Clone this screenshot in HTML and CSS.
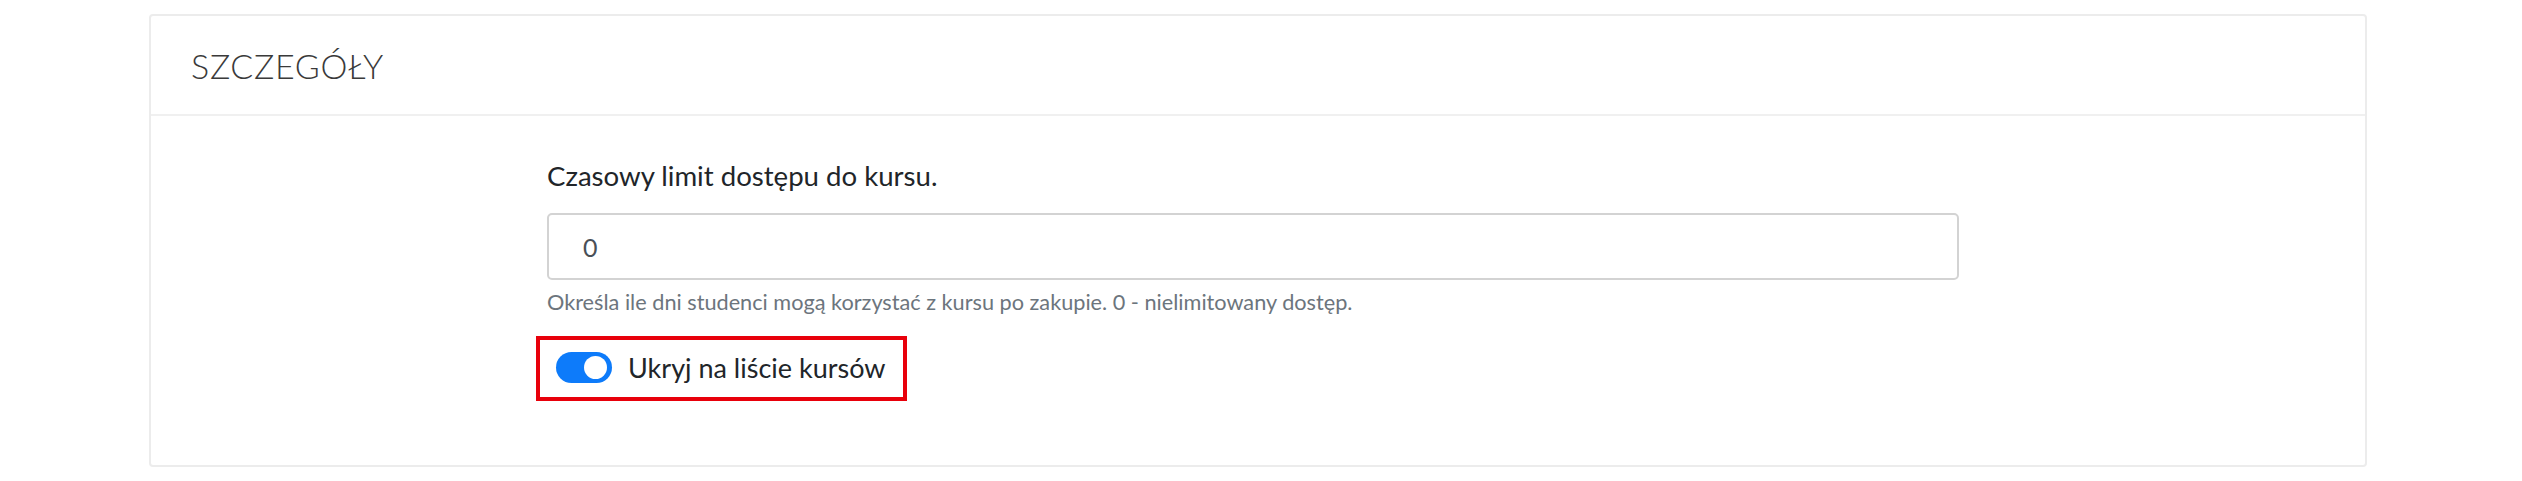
FILE: index.html
```html
<!DOCTYPE html>
<html lang="pl">
<head>
<meta charset="utf-8">
<title>Szczegóły</title>
<link rel="stylesheet" href="styles.css">
</head>
<body>
<div class="page">
  <section class="card">
    <header class="card-header">
      <h2 class="card-title">SZCZEGÓŁY</h2>
    </header>
    <div class="card-body">
      <div class="form-col">
        <label class="field-label" for="limit">Czasowy limit dostępu do kursu.</label>
        <input class="field-input" id="limit" type="text" value="0">
        <p class="field-help">Określa ile dni studenci mogą korzystać z kursu po zakupie. 0 - nielimitowany dostęp.</p>
        <div class="highlight">
          <span class="switch"><span class="knob"></span></span>
          <span class="switch-label">Ukryj na liście kursów</span>
        </div>
      </div>
    </div>
  </section>
</div>
</body>
</html>
```
FILE: styles.css
```css
* { box-sizing: border-box; }
html, body { margin: 0; padding: 0; background: #fff; }
body {
  font-family: Lato, "Liberation Sans", sans-serif;
  color: #212529;
}
.page {
  padding: 14px 155px 14px 149px;
}
.card {
  border: 2px solid #ececec;
  border-radius: 4px;
  background: #fff;
  height: 453px;
  display: flex;
  flex-direction: column;
}
.card-header {
  height: 100px;
  border-bottom: 2px solid #f0f0f0;
  display: flex;
  align-items: center;
  padding-left: 40px;
}
.card-title {
  margin: 0;
  font-family: "Lato Light", Lato, "Liberation Sans", sans-serif;
  font-weight: 300;
  font-size: 34px;
  letter-spacing: 0.7px;
  color: #3a3a3a;
}
.card-body {
  padding: 42px 0 0 396px;
}
.form-col {
  width: 1412px;
  display: flex;
  flex-direction: column;
  align-items: flex-start;
}
.field-label {
  font-size: 27.6px;
  line-height: 36px;
  color: #212529;
}
.field-input {
  margin-top: 19px;
  width: 100%;
  height: 67px;
  border: 2px solid #d3d3d3;
  border-radius: 5px;
  padding: 0 34px;
  font-family: inherit;
  font-size: 25px;
  color: #495057;
  outline: none;
}
.field-help {
  margin: 7px 0 0;
  font-size: 21.7px;
  line-height: 31px;
  color: #6c757d;
}
.highlight {
  margin-top: 18px;
  margin-left: -11px;
  border: 4px solid #e8000b;
  display: flex;
  align-items: center;
  gap: 16px;
  height: 65px;
  padding: 0 18px 2px 16px;
}
.switch {
  width: 56px;
  height: 31px;
  border-radius: 16px;
  background: #0d7bfa;
  position: relative;
  flex: none;
}
.knob {
  position: absolute;
  right: 5px;
  top: 4px;
  width: 23px;
  height: 23px;
  border-radius: 50%;
  background: #fff;
}
.switch-label {
  font-size: 27px;
  line-height: 36px;
  color: #212529;
}
```
